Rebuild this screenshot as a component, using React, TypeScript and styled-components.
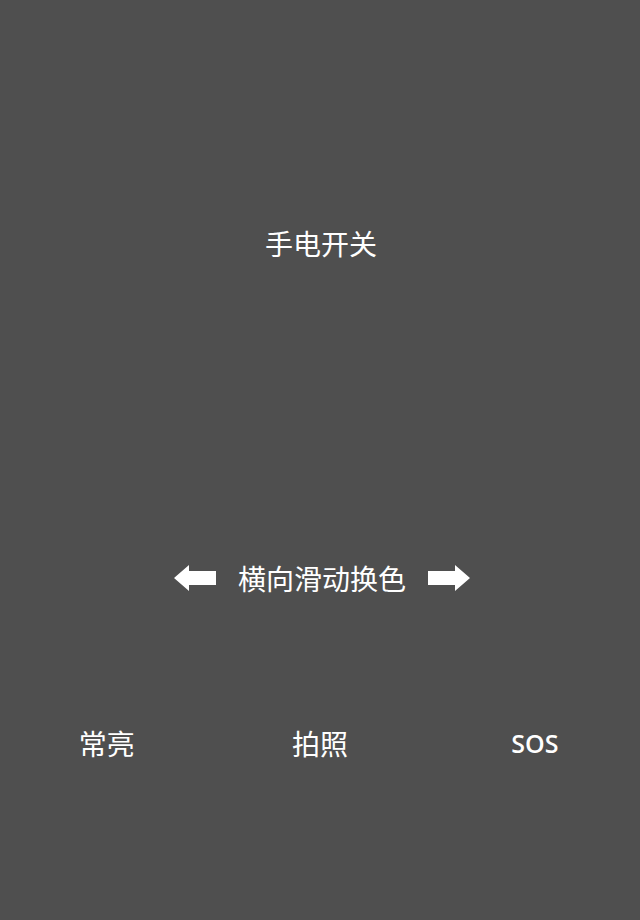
import React from 'react';
import styled, { createGlobalStyle } from 'styled-components';

const GlobalStyle = createGlobalStyle`
  html, body {
    margin: 0;
    padding: 0;
    background: #4f4f4f;
  }
  body {
    font-family: "Noto Sans CJK SC", "Open Sans", sans-serif;
    color: #ffffff;
  }
`;

const Screen = styled.div`
  width: 640px;
  height: 920px;
  background: #4f4f4f;
  display: flex;
  flex-direction: column;
  overflow: hidden;
`;

const ToggleArea = styled.div`
  height: 486px;
  display: flex;
  align-items: center;
  justify-content: center;
  padding-left: 2px;
`;

const Label = styled.span`
  font-size: 28px;
  line-height: 1;
  color: #ffffff;
  white-space: nowrap;
`;

const LatinLabel = styled(Label)`
  font-family: "Open Sans", sans-serif;
  font-size: 25px;
  font-weight: 600;
`;

const SwipeArea = styled.div`
  height: 184px;
  display: flex;
  align-items: center;
  justify-content: center;
  gap: 22px;
  padding-left: 4px;
`;

const ModeRow = styled.div`
  height: 146px;
  display: grid;
  grid-template-columns: repeat(3, 1fr);
  align-items: center;
`;

const ModeButton = styled.div<{ $shift?: number }>`
  display: flex;
  justify-content: center;
  align-items: center;
  padding-left: ${(p) => p.$shift || 0}px;
`;

const Arrow = ({ flip }: { flip?: boolean }) => (
  <svg
    width="42"
    height="26"
    viewBox="0 0 42 26"
    style={{ transform: flip ? 'scaleX(-1)' : undefined }}
  >
    <polygon points="0,13 15,0 15,6 42,6 42,20 15,20 15,26" fill="#ffffff" />
  </svg>
);

const App: React.FC = () => {
  return (
    <>
      <GlobalStyle />
      <Screen>
        <ToggleArea>
          <Label>手电开关</Label>
        </ToggleArea>
        <SwipeArea>
          <Arrow />
          <Label>横向滑动换色</Label>
          <Arrow flip />
        </SwipeArea>
        <ModeRow>
          <ModeButton>
            <Label>常亮</Label>
          </ModeButton>
          <ModeButton>
            <Label>拍照</Label>
          </ModeButton>
          <ModeButton $shift={3}>
            <LatinLabel>SOS</LatinLabel>
          </ModeButton>
        </ModeRow>
      </Screen>
    </>
  );
};

export default App;
